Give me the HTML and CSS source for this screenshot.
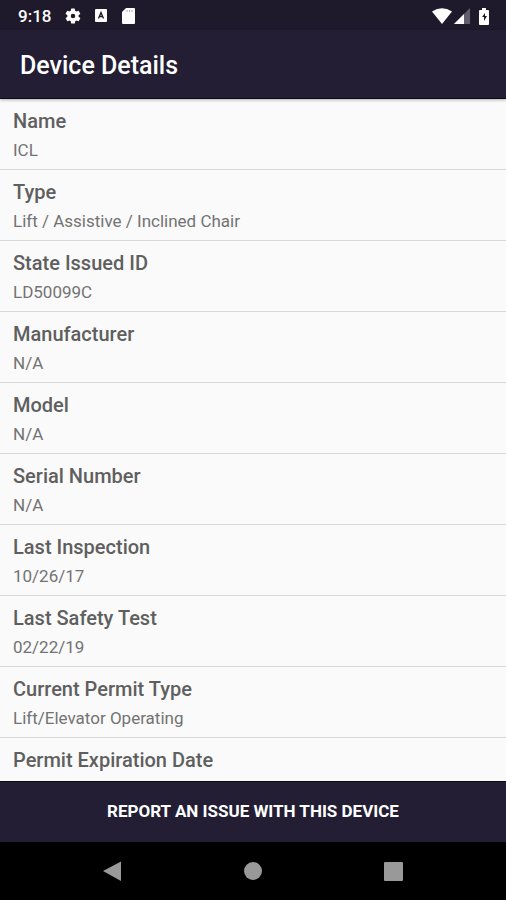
FILE: index.html
```html
<!DOCTYPE html>
<html lang="en">
<head>
<meta charset="utf-8">
<meta name="viewport" content="width=device-width, initial-scale=1">
<title>Device Details</title>
<link rel="stylesheet" href="styles.css">
</head>
<body>
<div class="status">
  <div class="group left">
    <span class="time">9:18</span>
    <svg width="18" height="18" viewBox="0 0 24 24"><path fill="#fff" d="M19.400 13a7.500 7.500 0 0 0 0-2l2.100-1.600a.5.5 0 0 0 .1-.6l-2-3.500a.5.5 0 0 0-.6-.2l-2.500 1a7.300 7.300 0 0 0-1.700-1l-.4-2.600a.5.5 0 0 0-.5-.5h-4a.5.5 0 0 0-.5.5L9 5.100a7.300 7.300 0 0 0-1.700 1l-2.500-1a.5.5 0 0 0-.6.2l-2 3.500a.5.5 0 0 0 .1.6L4.500 11a7.500 7.500 0 0 0 0 2l-2.100 1.600a.5.5 0 0 0-.1.6l2 3.500c.1.200.4.300.6.200l2.500-1a7.300 7.300 0 0 0 1.700 1l.4 2.600c0 .3.200.5.5.5h4c.3 0 .5-.2.5-.5l.4-2.600a7.300 7.300 0 0 0 1.700-1l2.500 1c.2.100.5 0 .6-.2l2-3.500a.5.5 0 0 0-.1-.6zM12 15a3 3 0 1 1 0-6 3 3 0 0 1 0 6z"/></svg>
    <svg width="14" height="14" viewBox="0 0 14 14"><rect x="0" y="0" width="12" height="13" rx="1" fill="#fff"/><path d="M3.500 9.500 6 3.500l2.500 6M4.500 7.500h3" fill="none" stroke="#1e192b" stroke-width="1.300"/></svg>
    <svg width="14" height="16" viewBox="0 0 14 16"><path d="M4 0h8q1 0 1 1v14q0 1-1 1H1q-1 0-1-1V4z" fill="#fff"/><path d="M5 2v2M7.500 2v2M10 2v2" stroke="#aaa" stroke-width="1"/></svg>
  </div>
  <div class="group right">
    <svg width="20" height="16" viewBox="0 0 20 16"><path d="M0 3.500Q10-3 20 3.500L10 16z" fill="#fff"/></svg>
    <svg width="16" height="16" viewBox="0 0 16 16"><path d="M16 0v16H0z" fill="#625e6c"/><path d="M10 6v10H0z" fill="#fff"/></svg>
    <svg class="battery" width="12" height="17" viewBox="0 0 12 17"><path d="M4 0h4v2h2q1 0 1 1v13q0 1-1 1H2q-1 0-1-1V3q0-1 1-1h2z" fill="#fff"/><path d="M7 5 4 9h2v4l3-5H7z" fill="#1e192b"/></svg>
  </div>
</div>
<header class="bar"><h1>Device Details</h1></header>
<main class="list">
  <dl>
    <div class="row"><dt>Name</dt><dd>ICL</dd></div>
    <div class="row"><dt>Type</dt><dd>Lift / Assistive / Inclined Chair</dd></div>
    <div class="row"><dt>State Issued ID</dt><dd>LD50099C</dd></div>
    <div class="row"><dt>Manufacturer</dt><dd>N/A</dd></div>
    <div class="row"><dt>Model</dt><dd>N/A</dd></div>
    <div class="row"><dt>Serial Number</dt><dd>N/A</dd></div>
    <div class="row"><dt>Last Inspection</dt><dd>10/26/17</dd></div>
    <div class="row"><dt>Last Safety Test</dt><dd>02/22/19</dd></div>
    <div class="row"><dt>Current Permit Type</dt><dd>Lift/Elevator Operating</dd></div>
    <div class="row"><dt>Permit Expiration Date</dt></div>
  </dl>
</main>
<button class="report" type="button">REPORT AN ISSUE WITH THIS DEVICE</button>
<nav class="nav">
  <button type="button" aria-label="Back"><svg width="20" height="20" viewBox="0 0 20 20"><path d="M18 0.500v19.500L0 10z" fill="#999"/></svg></button>
  <button type="button" aria-label="Home"><svg width="20" height="20" viewBox="0 0 20 20"><circle cx="10" cy="10" r="9" fill="#999"/></svg></button>
  <button type="button" aria-label="Overview"><svg width="20" height="20" viewBox="0 0 20 20"><rect x="1" y="1" width="19" height="19" rx="1" fill="#999"/></svg></button>
</nav>
</body>
</html>
```
FILE: styles.css
```css
* { box-sizing: border-box; }
body {
  margin: 0;
  height: 100vh;
  display: flex;
  flex-direction: column;
  background: #fafafa;
  font-family: Roboto, "Liberation Sans", sans-serif;
}
.status {
  display: flex;
  align-items: center;
  justify-content: space-between;
  flex: none;
  padding: 7px 16px 5px 18px;
  background: #1e192b;
  color: #fff;
  line-height: 18px;
}
.group { display: flex; align-items: center; }
.left { gap: 13px; }
.right { gap: 2px; }
.battery { margin-left: 6px; }
.time { font-size: 17px; font-weight: 500; }
.bar {
  flex: none;
  padding: 22px 20px 18px;
  background: #231e33;
  border-bottom: 1px solid #0c0914;
  box-shadow: 0 1px 3px rgba(0, 0, 0, 0.3);
  color: #fff;
}
h1 { margin: 0; font-size: 25px; line-height: 28px; font-weight: 500; }
.list { flex: 1; min-height: 0; overflow: hidden; }
dl { margin: 0; }
.row { padding: 8px 13px 4px; border-bottom: 1px solid #d8d8d8; }
.row:last-child { border-bottom: 0; }
dt { color: #5f5f5f; font-size: 20px; line-height: 28px; font-weight: 500; }
dd { margin: 0; color: #737373; font-size: 17px; line-height: 30px; }
.report {
  flex: none;
  border: 0;
  border-top: 1px solid #0c0914;
  padding: 19px 20px 21px;
  background: #231e33;
  color: #fff;
  font: 700 17px/20px Roboto, "Liberation Sans", sans-serif;
}
.nav {
  flex: none;
  display: flex;
  justify-content: center;
  gap: 100px;
  padding: 9px 0;
  background: #000;
}
.nav button {
  display: flex;
  align-items: center;
  justify-content: center;
  width: 40px;
  height: 40px;
  padding: 0;
  border: 0;
  background: none;
}
```
